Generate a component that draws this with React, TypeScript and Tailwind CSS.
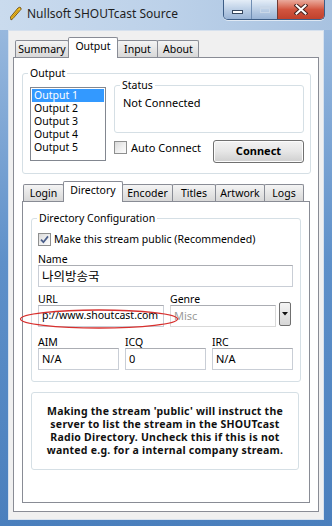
import React from "react";

type Tab = { label: string; w: string };

const outerTabs: Tab[] = [
  { label: "Summary", w: "w-[54px]" },
  { label: "Output", w: "w-[50px]" },
  { label: "Input", w: "w-[41px]" },
  { label: "About", w: "w-[42px]" },
];

const innerTabs: Tab[] = [
  { label: "Login", w: "w-[41px]" },
  { label: "Directory", w: "w-[60px]" },
  { label: "Encoder", w: "w-[51px]" },
  { label: "Titles", w: "w-[44px]" },
  { label: "Artwork", w: "w-[50px]" },
  { label: "Logs", w: "w-[40px]" },
];

function TabStrip({ tabs, active, className = "" }: { tabs: Tab[]; active: string; className?: string }) {
  return (
    <div className={`flex h-[20px] items-end ${className}`}>
      {tabs.map((t, i) =>
        t.label === active ? (
          <div
            key={t.label}
            className={`${t.w} relative z-10 -mb-px flex h-[21px] shrink-0 justify-center rounded-t-[2px] border border-b-0 border-[#898c95] bg-white pt-[2px] leading-[13px] ${i ? "-ml-px" : ""}`}
          >
            {t.label}
          </div>
        ) : (
          <div
            key={t.label}
            className={`${t.w} flex h-[17px] shrink-0 justify-center rounded-t-[2px] border border-b-0 border-[#898c95] bg-linear-to-b from-[#f4f4f4] to-[#d8d8d8] pt-[2px] leading-[13px] ${i ? "-ml-px" : ""}`}
          >
            {t.label}
          </div>
        )
      )}
    </div>
  );
}

function GroupBox({
  title,
  className = "",
  bodyClass = "",
  children,
}: {
  title: string;
  className?: string;
  bodyClass?: string;
  children?: React.ReactNode;
}) {
  return (
    <fieldset className={`rounded-[3px] border border-[#d5dfe5] ${className}`}>
      <legend className="ml-[5px] px-[2px] leading-[12px]">{title}</legend>
      <div className={bodyClass}>{children}</div>
    </fieldset>
  );
}

function CheckBox({ checked }: { checked?: boolean }) {
  return (
    <span className="flex h-[13px] w-[13px] shrink-0 items-center justify-center border border-[#8e8f8f] bg-linear-to-br from-[#d9d9d9] via-[#eeeeee] to-[#fcfcfc]">
      {checked && (
        <svg width="9" height="9" viewBox="0 0 9 9">
          <path d="M1 4.6 L3.4 7.2 L8 1.4" fill="none" stroke="#4a5e8a" strokeWidth="1.7" />
        </svg>
      )}
    </span>
  );
}

function TextBox({ value, className = "", muted }: { value: string; className?: string; muted?: boolean }) {
  return (
    <div
      className={`flex h-[22px] items-center border border-[#c9ced6] border-t-[#abadb3] bg-white pl-[3px] ${muted ? "text-[#9a9a9a]" : ""} ${className}`}
    >
      {value}
    </div>
  );
}

export default function App() {
  return (
    <div className="flex h-[526px] w-[332px] flex-col overflow-hidden bg-linear-to-b from-[#9fbde0] via-[#5e90c9] to-[#4a7fbd] font-['Noto_Sans',sans-serif] text-[10.5px] text-black">
      {/* title bar */}
      <div className="flex h-[30px] shrink-0 items-start bg-linear-to-r from-[#cadbee] via-[#bcd1e9] to-[#a8c2e0]">
        <svg className="ml-[9px] mt-[6px]" width="13" height="15" viewBox="0 0 13 15">
          <path d="M2 14 L1.5 11 L9 2 Q11 0.5 12 2 Q12.5 3.5 11 4.5 L4 12.5 Z" fill="#f3c323" stroke="#6b4a12" strokeWidth="0.9" />
          <path d="M3 11.5 L9.5 4" stroke="#b47a10" strokeWidth="0.8" />
        </svg>
        <span className="ml-[5px] mt-[6px] text-[12px] leading-[16px] text-[#1e1e1e]">Nullsoft SHOUTcast Source</span>
        <div className="ml-auto mr-[7px] flex h-[20px] overflow-hidden rounded-b-[5px] border border-t-0 border-[#3d5d86] shadow-[0_1px_0_rgba(255,255,255,0.6)]">
          <div className="flex w-[27px] items-end justify-center bg-linear-to-b from-[#e4edf7] via-[#bccfe6] to-[#9ab4d6] pb-[5px]">
            <div className="h-[4px] w-[11px] border border-[#35465e] bg-white" />
          </div>
          <div className="flex w-[26px] items-center justify-center border-l border-[#6f8db3] bg-linear-to-b from-[#e4edf7] via-[#bccfe6] to-[#9ab4d6]">
            <div className="h-[7px] w-[10px] border border-[#c9d7e8] shadow-[inset_0_2px_0_#c9d7e8]" />
          </div>
          <div className="flex w-[47px] items-center justify-center border-l border-[#6f3a34] bg-linear-to-b from-[#e9aa9c] via-[#d2553f] to-[#c0412c]">
            <svg width="14" height="11" viewBox="0 0 14 11">
              <path d="M2.5 1.5 L11.5 9.5 M11.5 1.5 L2.5 9.5" stroke="#4a2420" strokeWidth="4" strokeLinecap="square" />
              <path d="M2.5 1.5 L11.5 9.5 M11.5 1.5 L2.5 9.5" stroke="#ffffff" strokeWidth="2" strokeLinecap="square" />
            </svg>
          </div>
        </div>
      </div>

      {/* client area */}
      <div className="mx-[8px] h-[490px] shrink-0 border border-[#d6e1ee] bg-[#f0f0f0]">
        <TabStrip tabs={outerTabs} active="Output" className="ml-[4px] mt-[6px] pl-[2px]" />
        <div className="ml-[4px] h-[455px] w-[306px] border border-[#898c95] bg-white">
          <GroupBox title="Output" className="ml-[8px] mt-[9px] h-[107px] w-[289px]" bodyClass="flex pl-[7px]">
            <div className="mt-[8px] h-[74px] w-[76px] shrink-0 border border-[#828790] bg-white p-px">
              {["Output 1", "Output 2", "Output 3", "Output 4", "Output 5"].map((o, i) => (
                <div key={o} className={`h-[13px] pl-[2px] leading-[13px] ${i === 0 ? "bg-[#3399ff] text-white" : ""}`}>
                  {o}
                </div>
              ))}
            </div>
            <div className="ml-[8px] w-[190px]">
              <GroupBox title="Status" className="h-[54px] w-[190px]" bodyClass="pl-[8px] pt-[5px]">
                <div className="text-[11px] leading-[13px]">Not Connected</div>
              </GroupBox>
              <div className="flex items-start justify-between">
                <label className="mt-[8px] flex items-center gap-[4px] text-[11px] leading-[13px]">
                  <CheckBox />
                  Auto Connect
                </label>
                <button className="mt-[7px] h-[23px] w-[91px] rounded-[3px] border border-[#707070] bg-linear-to-b from-[#f3f3f3] via-[#e6e6e6] to-[#cfcfcf] text-[11px] font-bold shadow-[inset_0_0_0_1px_#fcfcfc]">
                  Connect
                </button>
              </div>
            </div>
          </GroupBox>

          <TabStrip tabs={innerTabs} active="Directory" className="ml-[8px] mt-[7px] pl-px" />
          <div className="ml-[8px] h-[302px] w-[288px] border border-[#898c95] bg-white">
            <GroupBox
              title="Directory Configuration"
              className="ml-[8px] mt-[10px] h-[170px] w-[270px]"
              bodyClass="pl-[6px] pr-[7px]"
            >
              <label className="mt-[9px] flex items-center gap-[3px] leading-[13px]">
                <CheckBox checked />
                Make this stream public (Recommended)
              </label>
              <div className="mt-[7px] leading-[12px]">Name</div>
              <TextBox value="나의방송국" className="w-[255px] border-[#a9c0d8] font-['Noto_Sans_CJK_KR',sans-serif] text-[12.5px]" />
              <div className="mt-[6px] flex gap-[6px]">
                <div className="relative w-[126px]">
                  <div className="leading-[12px]">URL</div>
                  <TextBox value="p://www.shoutcast.com" className="w-[126px] text-[10.5px]" />
                  <svg className="absolute left-[-19px] top-[14px]" width="162" height="24" viewBox="0 0 162 24">
                    <ellipse cx="80" cy="12" rx="78.5" ry="9" fill="none" stroke="#d8302e" strokeWidth="1.3" />
                  </svg>
                </div>
                <div>
                  <div className="leading-[12px]">Genre</div>
                  <div className="flex items-start gap-[3px]">
                    <TextBox value="Misc" muted className="w-[106px] border-[#d9d9d9] text-[11px]" />
                    <div className="-mt-[3px] flex h-[24px] w-[12px] items-center justify-center rounded-[2px] border border-[#707070] bg-linear-to-b from-[#f4f4f4] to-[#d6d6d6]">
                      <svg width="6" height="4" viewBox="0 0 6 4">
                        <path d="M0 0 H6 L3 3.5 Z" fill="#111" />
                      </svg>
                    </div>
                  </div>
                </div>
              </div>
              <div className="mt-[9px] grid grid-cols-[81px_81px_81px] gap-x-[6px]">
                {[
                  ["AIM", "N/A"],
                  ["ICQ", "0"],
                  ["IRC", "N/A"],
                ].map(([l, v]) => (
                  <div key={l}>
                    <div className="leading-[12px]">{l}</div>
                    <TextBox value={v} className="text-[11px]" />
                  </div>
                ))}
              </div>
            </GroupBox>
            <div className="ml-[8px] mt-[10px] h-[78px] w-[268px] rounded-[3px] border border-[#d5dfe5] pt-[12px] text-center text-[10.5px] font-bold leading-[13px] tracking-[0.25px] text-[#111]">
              Making the stream 'public' will instruct the
              <br />
              server to list the stream in the SHOUTcast
              <br />
              Radio Directory. Uncheck this if this is not
              <br />
              wanted e.g. for a internal company stream.
            </div>
          </div>
        </div>
      </div>
    </div>
  );
}
